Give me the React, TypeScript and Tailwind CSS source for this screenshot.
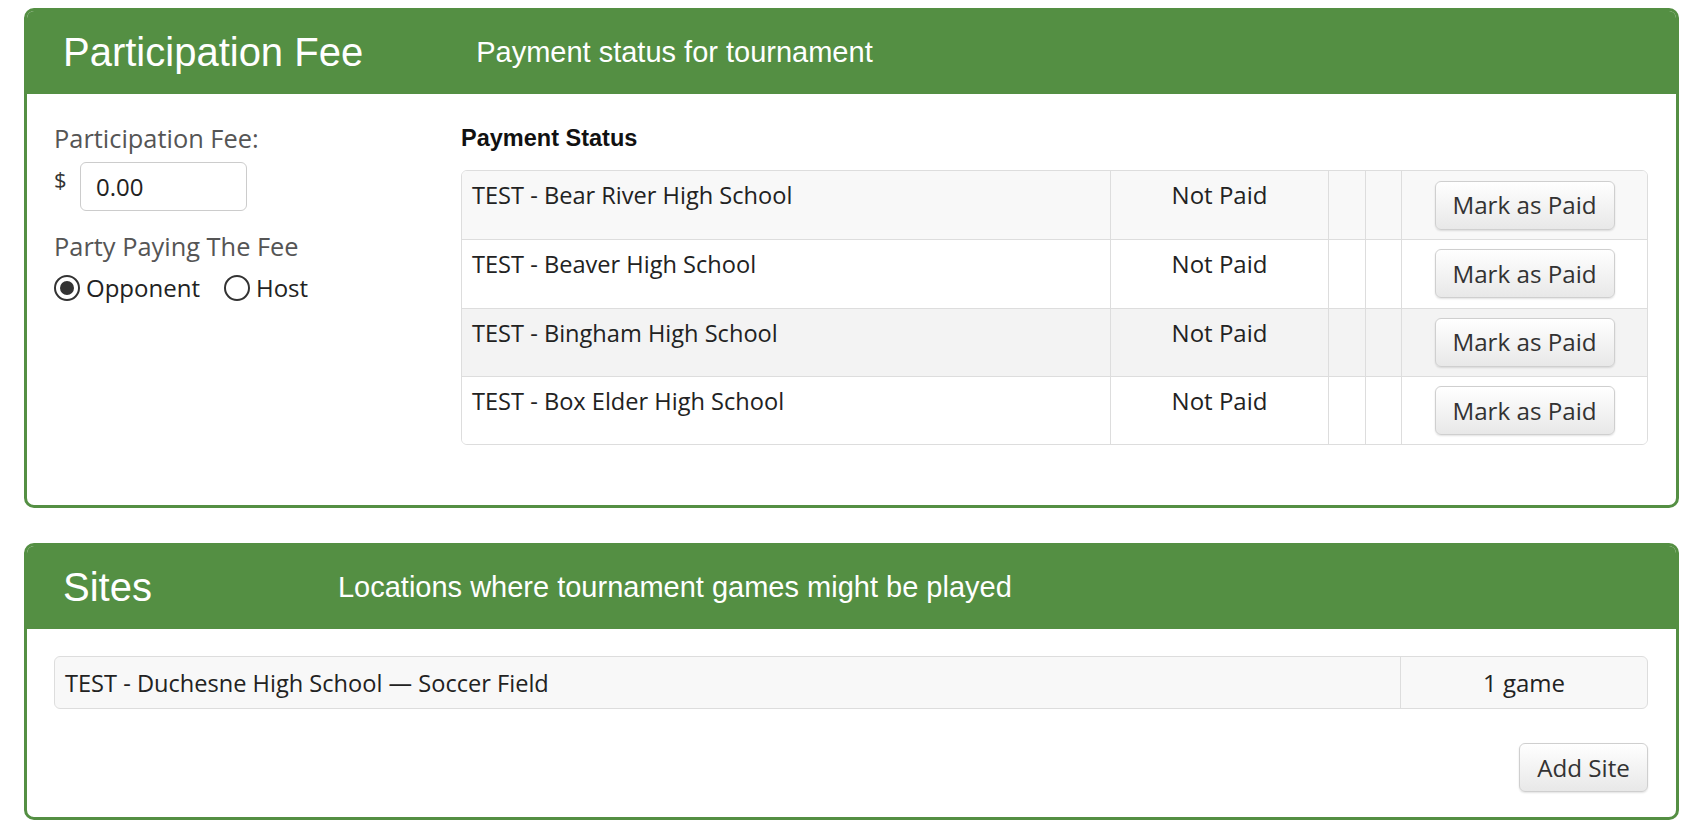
import React from "react";

const rows = [
  { name: "TEST - Bear River High School", bg: "bg-[#f8f8f8]" },
  { name: "TEST - Beaver High School", bg: "bg-white" },
  { name: "TEST - Bingham High School", bg: "bg-[#f3f3f3]" },
  { name: "TEST - Box Elder High School", bg: "bg-white" },
];

function Btn({ children, className = "" }: { children: React.ReactNode; className?: string }) {
  return (
    <button
      className={
        "h-[49px] rounded-[6px] border border-[#cfcfcf] bg-gradient-to-b from-white to-[#e8e8e8] text-[24.2px] text-[#333] shadow-[0_1px_2px_rgba(0,0,0,0.12)] " +
        className
      }
      style={{ fontFamily: '"Open Sans", sans-serif' }}
    >
      {children}
    </button>
  );
}

function Header({ title, subtitle, gap }: { title: string; subtitle: string; gap: string }) {
  return (
    <div
      className="flex h-[83px] items-center bg-[#548f43] pl-[36px] text-white"
      style={{ fontFamily: '"Liberation Sans", Arial, sans-serif' }}
    >
      <div className="text-[40px] leading-none pb-[2px]">{title}</div>
      <div className={"text-[29px] leading-none " + gap}>{subtitle}</div>
    </div>
  );
}

export default function App() {
  return (
    <div
      className="min-h-screen bg-white pl-[24px] pr-[26px] pt-[8px] text-[#222]"
      style={{ fontFamily: '"Open Sans", sans-serif' }}
    >
      {/* Participation Fee panel */}
      <div className="overflow-hidden rounded-[10px] border-[3px] border-[#548f43]">
        <Header title="Participation Fee" subtitle="Payment status for tournament" gap="ml-[113px]" />
        <div className="flex pb-[60px] pl-[27px] pr-[28px]">
          <div className="w-[407px] shrink-0 pt-[27px]">
            <div className="text-[25.4px] leading-[34px] text-[#555]">Participation Fee:</div>
            <div className="mt-[7px] flex items-start">
              <span className="mt-[4px] w-[26px] text-[22px] leading-[26px] text-[#333]">$</span>
              <input
                defaultValue="0.00"
                className="h-[49px] w-[167px] rounded-[6px] border border-[#ccc] px-[15px] text-[24px] text-[#222] outline-none"
                style={{ fontFamily: '"Open Sans", sans-serif' }}
              />
            </div>
            <div className="mt-[18px] text-[25.4px] leading-[34px] text-[#555]">Party Paying The Fee</div>
            <div className="mt-[8px] flex items-center text-[24px] leading-[34px] text-[#222]">
              <span className="flex h-[26px] w-[26px] items-center justify-center rounded-full border-[2px] border-[#333]">
                <span className="h-[14px] w-[14px] rounded-full bg-[#333]" />
              </span>
              <span className="ml-[6px]">Opponent</span>
              <span className="ml-[24px] h-[26px] w-[26px] rounded-full border-[2px] border-[#333]" />
              <span className="ml-[6px]">Host</span>
            </div>
          </div>
          <div className="flex-1 pt-[30px]">
            <div
              className="text-[23.5px] font-bold leading-[28px] text-[#111]"
              style={{ fontFamily: '"Liberation Sans", Arial, sans-serif' }}
            >
              Payment Status
            </div>
            <div className="mt-[18px] overflow-hidden rounded-[6px] border border-[#ddd]">
              {rows.map((r, i) => (
                <div
                  key={r.name}
                  className={"flex h-[68.3px] text-[24px] leading-[34px] " + r.bg + (i > 0 ? " border-t border-[#ddd]" : "")}
                >
                  <div className="w-[648px] shrink-0 pl-[10px] pt-[7px] text-[23.6px]">{r.name}</div>
                  <div className="w-[218px] shrink-0 border-l border-[#ddd] pt-[7px] text-center">Not Paid</div>
                  <div className="w-[37px] shrink-0 border-l border-[#ddd]" />
                  <div className="w-[36px] shrink-0 border-l border-[#ddd]" />
                  <div className="flex flex-1 items-center justify-center border-l border-[#ddd]">
                    <Btn className="w-[180px]">Mark as Paid</Btn>
                  </div>
                </div>
              ))}
            </div>
          </div>
        </div>
      </div>

      {/* Sites panel */}
      <div className="mt-[35px] overflow-hidden rounded-[10px] border-[3px] border-[#548f43]">
        <Header title="Sites" subtitle="Locations where tournament games might be played" gap="ml-[186px]" />
        <div className="pb-[25px] pl-[27px] pr-[28px] pt-[27px]">
          <div className="flex h-[53px] overflow-hidden rounded-[6px] border border-[#ddd] bg-[#f8f8f8] text-[24px] leading-[34px]">
            <div className="flex flex-1 items-center pl-[10px] text-[23.6px]">TEST - Duchesne High School — Soccer Field</div>
            <div className="flex w-[247px] items-center justify-center border-l border-[#ddd]">1 game</div>
          </div>
          <div className="mt-[34px] flex justify-end">
            <Btn className="w-[129px]">Add Site</Btn>
          </div>
        </div>
      </div>
    </div>
  );
}
